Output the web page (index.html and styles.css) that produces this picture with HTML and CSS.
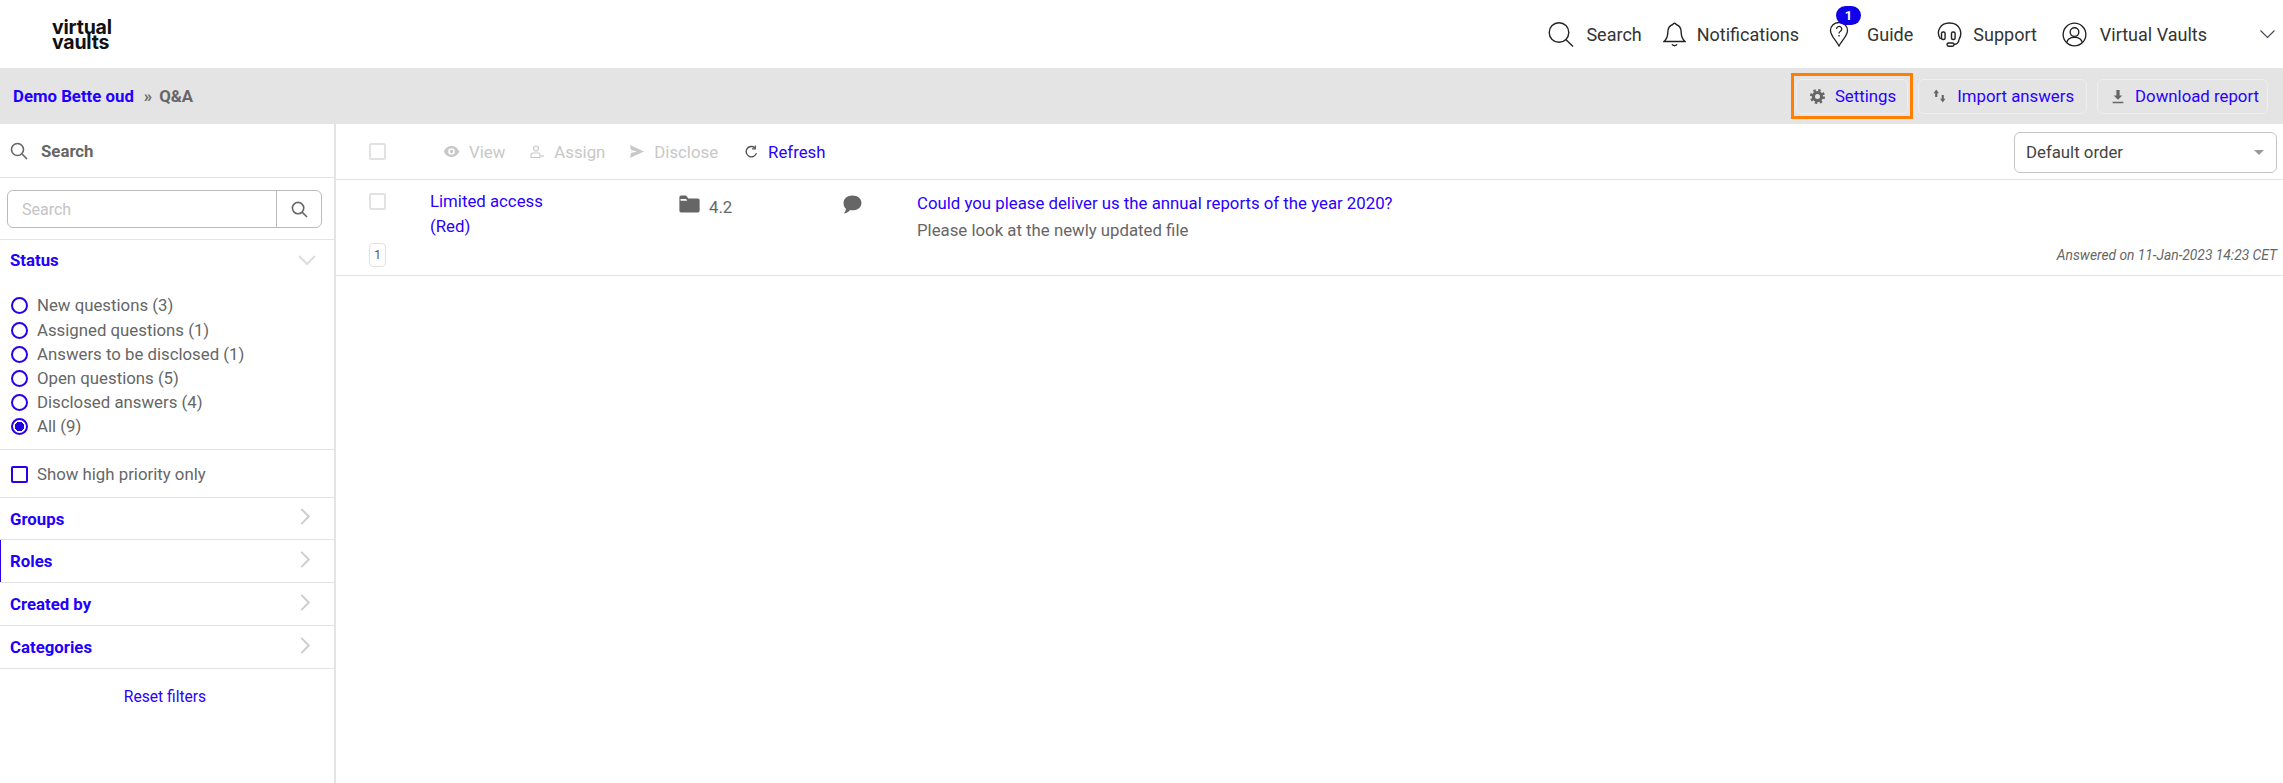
FILE: index.html
```html
<!DOCTYPE html>
<html lang="en">
<head>
<meta charset="utf-8">
<title>Q&amp;A</title>
<link rel="stylesheet" href="styles.css">
</head>
<body>
<header class="topbar">
  <div class="logo"><span>virtual</span><span>vaults</span></div>
  <nav class="topnav">
    <a class="topitem i-search"><svg width="26" height="25" viewBox="0 0 26 25" fill="none" stroke="#222" stroke-width="1.400"><circle cx="11" cy="10.500" r="9.800"/><path d="M17.800 17.500 25 24.500"/></svg>Search</a>
    <a class="topitem i-bell"><svg width="23" height="26" viewBox="0 0 23 26" fill="none" stroke="#222" stroke-width="1.400"><path d="M9.800 3.500a1.800 1.800 0 0 1 3.400 0c3.500 1 5 4 5 8 0 4 1.300 6.800 3.800 9H1c2.500-2.200 3.800-5 3.800-9 0-4 1.500-7 5-8z"/><path d="M9 23.300a2.700 2.300 0 0 0 5 0"/></svg>Notifications</a>
    <a class="topitem i-guide"><span class="pin"><svg width="20" height="25" viewBox="0 0 20 25" fill="none" stroke="#222" stroke-width="1.300"><path d="M10 24C7 18 1.500 14 1.500 8.500a8.500 8 0 0 1 17 0C18.500 14 13 18 10 24z"/><path d="M7.500 7a2.600 2.600 0 1 1 3.900 2.300c-.9.500-1.400 1-1.400 2.100M10 13v1.500"/></svg><span class="badge">1</span></span>Guide</a>
    <a class="topitem i-support"><svg width="25" height="25" viewBox="0 0 25 25" fill="none" stroke="#222" stroke-width="1.400"><path d="M3.500 17C-1 11 2 1 12.500 1S26 11 22 17.500c-.3 3-2 4.800-5 5"/><rect x="4.500" y="10" width="3.600" height="7.500" rx="1.500"/><rect x="14.500" y="10" width="3.600" height="7.500" rx="1.500"/><rect x="10" y="21" width="7" height="3.200" rx="1.600"/></svg>Support</a>
    <a class="topitem i-user"><svg width="25" height="25" viewBox="0 0 26 26" fill="none" stroke="#222" stroke-width="1.400"><circle cx="13" cy="13" r="11.800"/><circle cx="13" cy="10.500" r="4.500"/><path d="M5 21.500c.6-4 4-5.500 8-5.500s7.400 1.500 8 5.500"/></svg>Virtual Vaults</a>
    <svg class="topcaret" width="15" height="8" viewBox="0 0 15 8" fill="none" stroke="#445" stroke-width="1.100"><path d="M.5.5l7 7 7-7"/></svg>
  </nav>
</header>

<div class="crumbbar">
  <div class="crumbs"><a class="crumb-link">Demo Bette oud</a><span class="crumb-sep">»</span><span class="crumb-cur">Q&amp;A</span></div>
  <div class="actions">
    <div class="focus-ring"><button class="btn btn-settings"><svg width="15" height="15" viewBox="0 0 24 24" fill="none" stroke="#666"><circle cx="12" cy="12" r="6.500" stroke-width="5"/><circle cx="12" cy="12" r="10" stroke-width="4" stroke-dasharray="3.900 3.950"/></svg>Settings</button></div>
    <button class="btn btn-import"><svg width="13" height="16" viewBox="0 0 12 14" fill="#666"><path d="M3 1 .5 4.500H2V8h2V4.500h1.500zM9 13l2.500-3.500H10V6H8v3.500H6.500z"/></svg>Import answers</button>
    <button class="btn btn-download"><svg width="14" height="15" viewBox="0 0 12 14" fill="#666"><path d="M4.500 1h3v5H10L6 10 2 6h2.500zM1 12h10v1.400H1z"/></svg>Download report</button>
  </div>
</div>

<div class="layout">
  <aside class="sidebar">
    <div class="side-head"><svg class="mag" width="18" height="18" viewBox="0 0 18 18" fill="none" stroke="#666" stroke-width="1.600"><circle cx="7.500" cy="7.500" r="6"/><path d="M12 12l5 5"/></svg>Search</div>
    <div class="search-row">
      <div class="search-box"><span class="placeholder">Search</span><span class="search-go"><svg width="17" height="17" viewBox="0 0 18 18" fill="none" stroke="#666" stroke-width="1.700"><circle cx="7.500" cy="7.500" r="6"/><path d="M12 12l5 5"/></svg></span></div>
    </div>
    <div class="status">
      <div class="filter-title status-title">Status<svg width="20" height="11" viewBox="0 0 20 11" fill="none" stroke="#ddd" stroke-width="2"><path d="M2 1l8 8 8-8"/></svg></div>
      <ul class="radios">
        <li><span class="radio"></span>New questions (3)</li>
        <li><span class="radio"></span>Assigned questions (1)</li>
        <li><span class="radio"></span>Answers to be disclosed (1)</li>
        <li><span class="radio"></span>Open questions (5)</li>
        <li><span class="radio"></span>Disclosed answers (4)</li>
        <li><span class="radio on"></span>All (9)</li>
      </ul>
    </div>
    <div class="priority"><span class="check"></span>Show high priority only</div>
    <div class="filter-title row first">Groups<svg class="chev" width="11" height="17" viewBox="0 0 11 18" fill="none" stroke="#ccc" stroke-width="2"><path d="M1 1l8 8-8 8"/></svg></div>
    <div class="filter-title row active">Roles<svg class="chev" width="11" height="17" viewBox="0 0 11 18" fill="none" stroke="#ccc" stroke-width="2"><path d="M1 1l8 8-8 8"/></svg></div>
    <div class="filter-title row">Created by<svg class="chev" width="11" height="17" viewBox="0 0 11 18" fill="none" stroke="#ccc" stroke-width="2"><path d="M1 1l8 8-8 8"/></svg></div>
    <div class="filter-title row">Categories<svg class="chev" width="11" height="17" viewBox="0 0 11 18" fill="none" stroke="#ccc" stroke-width="2"><path d="M1 1l8 8-8 8"/></svg></div>
    <a class="reset">Reset filters</a>
  </aside>

  <main class="main">
    <div class="toolbar">
      <span class="box"></span>
      <div class="tools">
        <span class="tool"><svg width="17" height="11" viewBox="0 0 14 10" fill="#c8c8c8"><path d="M7 0C3.500 0 1 2.500 0 5c1 2.500 3.500 5 7 5s6-2.500 7-5c-1-2.500-3.500-5-7-5zm0 8a3 3 0 1 1 0-6 3 3 0 0 1 0 6z"/><circle cx="7" cy="5" r="1.500"/></svg>View</span>
        <span class="tool"><svg width="16" height="14" viewBox="0 0 14 14" fill="none" stroke="#c8c8c8" stroke-width="1.200"><circle cx="6" cy="3.500" r="2.500"/><path d="M1 12.500v-2c0-1.500 1-2.500 2.500-2.500h5c1 0 1.500 1 1.500 2v2.500z"/><path d="M11 11h3"/></svg>Assign</span>
        <span class="tool t-disclose"><svg width="16" height="13" viewBox="0 0 14 13" fill="#c8c8c8"><path d="M0 0l14 6.500L0 13l1-5 6-1.500L1 5z"/></svg>Disclose</span>
        <span class="tool live"><svg width="13" height="13" viewBox="0 0 12 12" fill="none" stroke="#555" stroke-width="1.300"><path d="M10.500 7.500A4.800 4.800 0 1 1 9 2.500"/><path d="M9.500 .5v3h-3" stroke-width="1.200"/></svg>Refresh</span>
      </div>
      <div class="select">Default order<span class="caret"></span></div>
    </div>
    <article class="qrow">
      <div class="col-check"><span class="box"></span><span class="num">1</span></div>
      <div class="col-access"><a>Limited access</a><a>(Red)</a></div>
      <div class="col-folder"><svg width="21" height="18" viewBox="0 0 18 16" fill="#666"><path d="M0 2a1.500 1.500 0 0 1 1.500-1.500H6L8 3h8.500A1.500 1.500 0 0 1 18 4.500V14a1.500 1.500 0 0 1-1.500 1.500h-15A1.500 1.500 0 0 1 0 14z"/><path d="M1 3.500h5l1 1.500H1z" fill="#fff"/></svg>4.2</div>
      <div class="col-chat"><svg width="21" height="19" viewBox="0 0 18 18" fill="#666"><path d="M9 .5c5 0 8.500 3 8.500 7s-3.500 7-8.500 7c-.8 0-1.500-.1-2.200-.2C5 16.500 3 17.500 .8 17.500c1-1 1.800-2.500 2-4.400C1.200 11.800.5 9.800.5 7.500c0-4 3.500-7 8.500-7z"/></svg></div>
      <div class="col-text">
        <a class="q">Could you please deliver us the annual reports of the year 2020?</a>
        <p class="a">Please look at the newly updated file</p>
        <p class="stamp">Answered on 11-Jan-2023 14:23 CET</p>
      </div>
    </article>
  </main>
</div>
</body>
</html>
```
FILE: styles.css
```css
* { box-sizing: border-box; }
html, body { margin: 0; height: 100%; }
body {
  font-family: Roboto, "Liberation Sans", sans-serif;
  font-size: 16.800px;
  color: #666;
  background: #fff;
  height: 783px;
  overflow: hidden;
  display: flex;
  flex-direction: column;
}
a { color: #2a00ff; }
ul, p { margin: 0; padding: 0; list-style: none; }

.topbar { height: 68px; display: flex; align-items: center; justify-content: space-between; padding: 0 8px 0 52px; flex: none; }
.logo { display: flex; flex-direction: column; font-family: Inter, "Liberation Sans", sans-serif; font-weight: 700; font-size: 19.500px; line-height: 14.500px; color: #111; letter-spacing: -.2px; margin-top: 1px; }
.topnav { display: flex; align-items: center; }
.topitem { display: flex; align-items: center; color: #333; font-size: 18px; }
.i-search { gap: 12px; margin-right: 21px; }
.i-bell { gap: 11px; margin-right: 30px; }
.i-guide { gap: 18px; margin-right: 24px; }
.i-support { gap: 11px; margin-right: 25px; }
.i-user { gap: 13px; margin-right: 53px; }
.pin { position: relative; display: flex; }
.badge { position: absolute; top: -16px; left: 7px; width: 25px; height: 19px; border-radius: 10px; background: #1000e8; color: #fff; font-size: 13px; font-weight: 700; line-height: 19px; text-align: center; }

.crumbbar { height: 56px; flex: none; background: #e4e4e4; display: flex; align-items: center; justify-content: space-between; padding: 0 15px 0 13px; }
.crumbs { display: flex; align-items: center; font-weight: 700; }
.crumb-link { color: #1f00ff; }
.crumb-sep { margin: 0 7px 0 10px; color: #666; }
.crumb-cur { color: #666; }
.actions { display: flex; align-items: center; gap: 5px; }
.focus-ring { border: 3px solid #ff8000; padding: 0 2px; height: 46px; display: flex; align-items: center; }
.btn { height: 35px; display: flex; align-items: center; border: 1px solid #efefef; border-radius: 6px; background: #e4e4e4; color: #2a00ff; font: inherit; }
.btn-settings { gap: 10px; padding: 0 11px 0 13px; }
.btn-import { gap: 11px; padding: 0 12px 0 14px; }
.btn-download { gap: 10px; padding: 0 8px 0 13px; margin-left: 5px; }

.layout { flex: 1; display: flex; min-height: 0; }
.sidebar { width: 336px; flex: none; border-right: 2px solid #e4e4e4; display: flex; flex-direction: column; }
.side-head { height: 54px; border-bottom: 1px solid #e4e4e4; display: flex; align-items: center; gap: 13px; padding: 1px 0 0 10px; font-weight: 700; }
.search-row { height: 62px; border-bottom: 1px solid #e4e4e4; padding-top: 12px; padding-left: 7px; }
.search-box { width: 315px; height: 38px; border: 1px solid #bbb; border-radius: 6px; display: flex; justify-content: space-between; align-items: center; }
.placeholder { padding-left: 14px; color: #c4c4c4; font-size: 16px; }
.search-go { width: 45px; height: 36px; border-left: 1px solid #bbb; display: flex; align-items: center; justify-content: center; }
.filter-title { display: flex; justify-content: space-between; align-items: center; font-weight: 700; color: #1f00ff; padding: 0 23px 0 10px; }
.status { height: 210px; border-bottom: 1px solid #e4e4e4; }
.status-title { height: 40px; padding-right: 17px; }
.radios { padding: 13px 0 0 11px; }
.radios li { display: flex; align-items: center; height: 24.100px; gap: 9px; }
.radios li:first-child { height: 24px; margin-bottom: 1px; }
.radio { width: 17px; height: 17px; border: 2px solid #2a00e6; border-radius: 50%; display: block; }
.radio.on { background: radial-gradient(circle, #1f00e6 0 4.500px, transparent 5px); }
.priority { height: 48px; border-bottom: 1px solid #e4e4e4; display: flex; align-items: center; gap: 9px; padding-left: 11px; padding-top: 1px; }
.check { width: 17px; height: 17px; border: 2px solid #2a00e6; border-radius: 2px; }
.row { height: 43px; border-bottom: 1px solid #e4e4e4; }
.row.first { height: 42px; }
.row.active { box-shadow: inset 1px 0 0 #2a00e6; }
.chev { margin-top: -4px; }
.reset { margin-top: 19px; text-align: center; font-size: 15.600px; padding-right: 4px; color: #2a00ff; }

.main { flex: 1; min-width: 0; }
.toolbar { height: 56px; border-bottom: 1px solid #e4e4e4; display: flex; align-items: center; padding: 0 6px 0 33px; }
.box { width: 17px; height: 17px; display: block; border: 2px solid #e2e2e2; border-radius: 2px; }
.tools { display: flex; align-items: center; margin-left: 57px; flex: 1; }
.tool { display: flex; align-items: center; gap: 9px; color: #c8c8c8; margin-right: 24px; }
.t-disclose { margin-right: 27px; }
.live { color: #2a00ff; gap: 10px; }
.select { width: 263px; height: 41px; border: 1px solid #c4c4c4; border-radius: 6px; display: flex; align-items: center; justify-content: space-between; padding: 0 12px 0 11px; color: #444; margin-top: 1px; }
.caret { width: 0; height: 0; border: 5px solid transparent; border-top: 5px solid #999; border-bottom: 0; }

.qrow { height: 96px; border-bottom: 1px solid #e4e4e4; display: flex; }
.col-check { width: 94px; padding: 13px 0 0 33px; display: flex; flex-direction: column; }
.num { width: 17px; height: 24px; margin-top: 33px; border: 1px solid #e2e2e2; border-radius: 4px; font-size: 12px; display: flex; align-items: center; justify-content: center; color: #555; }
.col-access { width: 249px; padding-top: 9px; display: flex; flex-direction: column; line-height: 24.500px; }
.col-folder { width: 163px; padding-top: 15px; display: flex; align-items: flex-start; gap: 9px; line-height: 24px; }
.col-chat { width: 75px; padding-top: 15px; }
.col-text { flex: 1; padding: 11px 6px 0 0; display: flex; flex-direction: column; }
.q { line-height: 24px; }
.a { line-height: 24px; margin-top: 3px; }
.stamp { font-style: italic; font-size: 13.800px; text-align: right; margin-top: 5px; }
```
